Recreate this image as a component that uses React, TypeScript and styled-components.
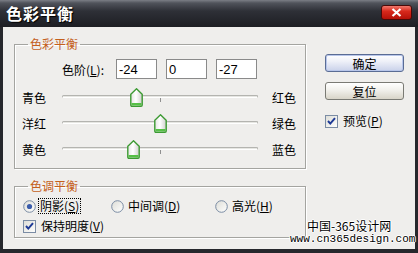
import styled, { createGlobalStyle } from 'styled-components';

const GlobalStyle = createGlobalStyle`
  html, body {
    margin: 0;
    padding: 0;
    background: #ffffff;
  }
  body {
    font-family: "Noto Sans CJK SC", "Liberation Sans", sans-serif;
    font-size: 12px;
  }
  * {
    box-sizing: border-box;
  }
`;

const cjk = `"Noto Sans CJK SC", "Liberation Sans", sans-serif`;

const sliders = [
  { left: '青色', right: '红色', value: -24 },
  { left: '洋红', right: '绿色', value: 0 },
  { left: '黄色', right: '蓝色', value: -27 },
];

function CheckIcon() {
  return (
    <svg width="13" height="13" viewBox="0 0 13 13">
      <defs>
        <linearGradient id="cb" x1="0" y1="0" x2="1" y2="1">
          <stop offset="0" stopColor="#dcdcd6" />
          <stop offset="1" stopColor="#ffffff" />
        </linearGradient>
      </defs>
      <rect x="0.5" y="0.5" width="12" height="12" fill="url(#cb)" stroke="#7b8ca4" />
      <path d="M3 6 L5.3 8.6 L10 3.2" fill="none" stroke="#1e3a96" strokeWidth="2" />
    </svg>
  );
}

function RadioIcon({ checked }: { checked?: boolean }) {
  return (
    <svg width="13" height="13" viewBox="0 0 13 13">
      <defs>
        <linearGradient id="rb" x1="0" y1="0" x2="1" y2="1">
          <stop offset="0" stopColor="#dcdcd6" />
          <stop offset="1" stopColor="#ffffff" />
        </linearGradient>
      </defs>
      <circle cx="6.5" cy="6.5" r="5.8" fill="url(#rb)" stroke="#7b8ca4" />
      {checked && <circle cx="6.5" cy="6.5" r="2.6" fill="#3a5cab" />}
    </svg>
  );
}

function Thumb() {
  return (
    <svg width="13" height="19" viewBox="0 0 13 19">
      <defs>
        <linearGradient id="th" x1="0" y1="0" x2="1" y2="0">
          <stop offset="0" stopColor="#e4e4e2" />
          <stop offset="0.45" stopColor="#ffffff" />
          <stop offset="1" stopColor="#cfcfcc" />
        </linearGradient>
      </defs>
      <path
        d="M6.5 0.8 L12.2 6.2 V17 Q12.2 18.2 11 18.2 H2 Q0.8 18.2 0.8 17 V6.2 Z"
        fill="url(#th)"
        stroke="#3c9a32"
        strokeWidth="1.4"
      />
      <rect x="1.5" y="15" width="10" height="2.4" fill="#56c046" />
    </svg>
  );
}

function CloseIcon() {
  return (
    <svg width="11" height="9" viewBox="0 0 11 9">
      <path d="M1.5 1 L9.5 8 M9.5 1 L1.5 8" stroke="#ffffff" strokeWidth="2.2" />
    </svg>
  );
}

export default function App() {
  return (
    <>
      <GlobalStyle />
      <Window>
        <TitleBar>
          <Title>色彩平衡</Title>
          <CloseButton>
            <CloseIcon />
          </CloseButton>
        </TitleBar>
        <Client>
          <LeftColumn>
            <Group $height={132}>
              <Legend>色彩平衡</Legend>
              <LevelRow>
                <LevelLabel>
                  色阶(<u>L</u>):
                </LevelLabel>
                <NumberBox defaultValue="-24" />
                <NumberBox defaultValue="0" />
                <NumberBox defaultValue="-27" />
              </LevelRow>
              {sliders.map((s, i) => (
                <SliderRow key={s.left} $first={i === 0}>
                  <SideLabel>{s.left}</SideLabel>
                  <Track>
                    <Groove />
                    <Tick />
                    <ThumbHolder style={{ left: `${((s.value + 100) / 200) * 196 - 6.5}px` }}>
                      <Thumb />
                    </ThumbHolder>
                  </Track>
                  <SideLabel>{s.right}</SideLabel>
                </SliderRow>
              ))}
            </Group>
            <Group $height={59} $gap={10}>
              <Legend>色调平衡</Legend>
              <RadioRow>
                <Option>
                  <RadioIcon checked />
                  <OptionText $focused>
                    阴影(<u>S</u>)
                  </OptionText>
                </Option>
                <Option>
                  <RadioIcon />
                  <OptionText>
                    中间调(<u>D</u>)
                  </OptionText>
                </Option>
                <Option>
                  <RadioIcon />
                  <OptionText>
                    高光(<u>H</u>)
                  </OptionText>
                </Option>
              </RadioRow>
              <CheckRow>
                <CheckIcon />
                <OptionText>
                  保持明度(<u>V</u>)
                </OptionText>
              </CheckRow>
            </Group>
          </LeftColumn>
          <RightColumn>
            <DialogButton $primary>确定</DialogButton>
            <DialogButton>复位</DialogButton>
            <PreviewRow>
              <CheckIcon />
              <OptionText>
                预览(<u>P</u>)
              </OptionText>
            </PreviewRow>
          </RightColumn>
        </Client>
        <Watermark>
          <MarkTitle>中国-365设计网</MarkTitle>
          <MarkUrl>www.cn365design.com</MarkUrl>
        </Watermark>
      </Window>
    </>
  );
}

const Window = styled.div`
  width: 418px;
  height: 253px;
  background: #26272c;
  display: flex;
  flex-direction: column;
  position: relative;
  overflow: hidden;
`;

const TitleBar = styled.div`
  height: 27px;
  flex: none;
  display: flex;
  justify-content: space-between;
  align-items: flex-start;
  padding: 0 6px 0 6px;
  background: linear-gradient(#7b7e86 0, #50535b 3px, #2e3037 11px, #1d1e23 27px);
`;

const Title = styled.div`
  color: #ffffff;
  font-family: ${cjk};
  font-weight: bold;
  font-size: 16px;
  line-height: 27px;
  letter-spacing: 1px;
  text-shadow: 1px 1px 1px #000000;
`;

const CloseButton = styled.div`
  width: 31px;
  height: 15px;
  margin-top: 5px;
  border: 1px solid #4a0a08;
  border-radius: 3px;
  background: linear-gradient(#f0786c 0, #d8291c 40%, #b51108 100%);
  display: flex;
  align-items: center;
  justify-content: center;
`;

const Client = styled.div`
  flex: 1;
  margin: 0 3px 4px 3px;
  background: #efeeec;
  display: flex;
  gap: 19px;
  padding: 10px 0 0 11px;
`;

const LeftColumn = styled.div`
  width: 292px;
  display: flex;
  flex-direction: column;
`;

const Group = styled.fieldset<{ $height: number; $gap?: number }>`
  margin: ${(p) => p.$gap ?? 0}px 0 0 0;
  padding: 0;
  min-width: 0;
  width: 292px;
  height: ${(p) => p.$height}px;
  border: 1px solid #a4a4a0;
  box-shadow: 1px 1px 0 #ffffff, inset 1px 1px 0 #ffffff;
  display: flex;
  flex-direction: column;
`;

const Legend = styled.legend`
  margin-left: 13px;
  padding: 0 2px;
  font-family: ${cjk};
  font-size: 12px;
  line-height: 14px;
  color: #c4601c;
`;

const LevelRow = styled.div`
  display: flex;
  align-items: center;
  gap: 9px;
  margin: 8px 0 0 47px;
`;

const LevelLabel = styled.span`
  width: 50px;
  margin-right: -5px;
  font-family: ${cjk};
  font-size: 12px;
  color: #000000;
`;

const NumberBox = styled.input`
  width: 41px;
  height: 20px;
  padding: 0 0 0 2px;
  border: 1px solid #8a8a8a;
  background: #ffffff;
  font-family: "Liberation Sans", sans-serif;
  font-size: 13px;
  color: #000000;
  outline: none;
`;

const SliderRow = styled.div<{ $first?: boolean }>`
  display: flex;
  align-items: center;
  height: 26px;
  margin-top: ${(p) => (p.$first ? 5 : 0)}px;
  padding-left: 7px;
`;

const SideLabel = styled.span`
  width: 24px;
  font-family: ${cjk};
  font-size: 12px;
  color: #000000;
  white-space: nowrap;
`;

const Track = styled.div`
  position: relative;
  width: 196px;
  height: 26px;
  margin: 0 14px 0 16px;
`;

const Groove = styled.div`
  position: absolute;
  left: 0;
  right: 0;
  top: 11px;
  height: 3px;
  border: 1px solid #b4b4b0;
  border-bottom-color: #ffffff;
  border-radius: 2px;
  background: #e6e6e2;
`;

const Tick = styled.div`
  position: absolute;
  left: 98px;
  top: 14px;
  width: 1px;
  height: 4px;
  background: #909090;
`;

const ThumbHolder = styled.div`
  position: absolute;
  top: 4px;
  width: 13px;
  height: 19px;
  display: flex;
`;

const RadioRow = styled.div`
  display: grid;
  grid-template-columns: 88px 104px auto;
  height: 16px;
  margin: 5px 0 0 8px;
`;

const Option = styled.div`
  display: flex;
  align-items: center;
  gap: 1px;
`;

const OptionText = styled.span<{ $focused?: boolean }>`
  font-family: ${cjk};
  font-size: 12px;
  line-height: 14px;
  color: #000000;
  padding: 0 1px;
  margin-left: 2px;
  outline: ${(p) => (p.$focused ? '1px dotted #000000' : 'none')};
`;

const CheckRow = styled.div`
  display: flex;
  align-items: center;
  height: 16px;
  margin: 4px 0 0 8px;
  gap: 2px;
`;

const RightColumn = styled.div`
  display: flex;
  flex-direction: column;
  padding-top: 17px;
  gap: 10px;
`;

const DialogButton = styled.div<{ $primary?: boolean }>`
  width: 79px;
  height: 18px;
  border: 1px solid ${(p) => (p.$primary ? '#5a6c94' : '#7a7a74')};
  border-radius: 3px;
  background: ${(p) =>
    p.$primary
      ? 'linear-gradient(#ffffff 0, #eef0f8 40%, #c9d1ea 100%)'
      : 'linear-gradient(#ffffff 0, #f3f2ee 40%, #d8d4c8 100%)'};
  box-shadow: ${(p) => (p.$primary ? 'inset 0 0 0 1px #b8c6ea' : 'none')};
  display: flex;
  align-items: center;
  justify-content: center;
  font-family: ${cjk};
  font-size: 12px;
  color: #000000;
`;

const PreviewRow = styled.div`
  display: flex;
  align-items: center;
  gap: 2px;
  margin-top: 4px;
`;

const Watermark = styled.div`
  position: absolute;
  left: 290px;
  top: 218px;
  display: flex;
  flex-direction: column;
  align-items: flex-start;
`;

const MarkTitle = styled.span`
  margin-left: 17px;
  font-family: ${cjk};
  font-size: 12px;
  line-height: 15px;
  color: #000000;
  text-shadow: 1px 0 0 #fff, -1px 0 0 #fff, 0 1px 0 #fff, 0 -1px 0 #fff;
`;

const MarkUrl = styled.span`
  font-family: "Liberation Mono", monospace;
  font-size: 11px;
  line-height: 13px;
  color: #000000;
  white-space: nowrap;
  text-shadow: 1px 0 0 #fff, -1px 0 0 #fff, 0 1px 0 #fff, 0 -1px 0 #fff;
`;
